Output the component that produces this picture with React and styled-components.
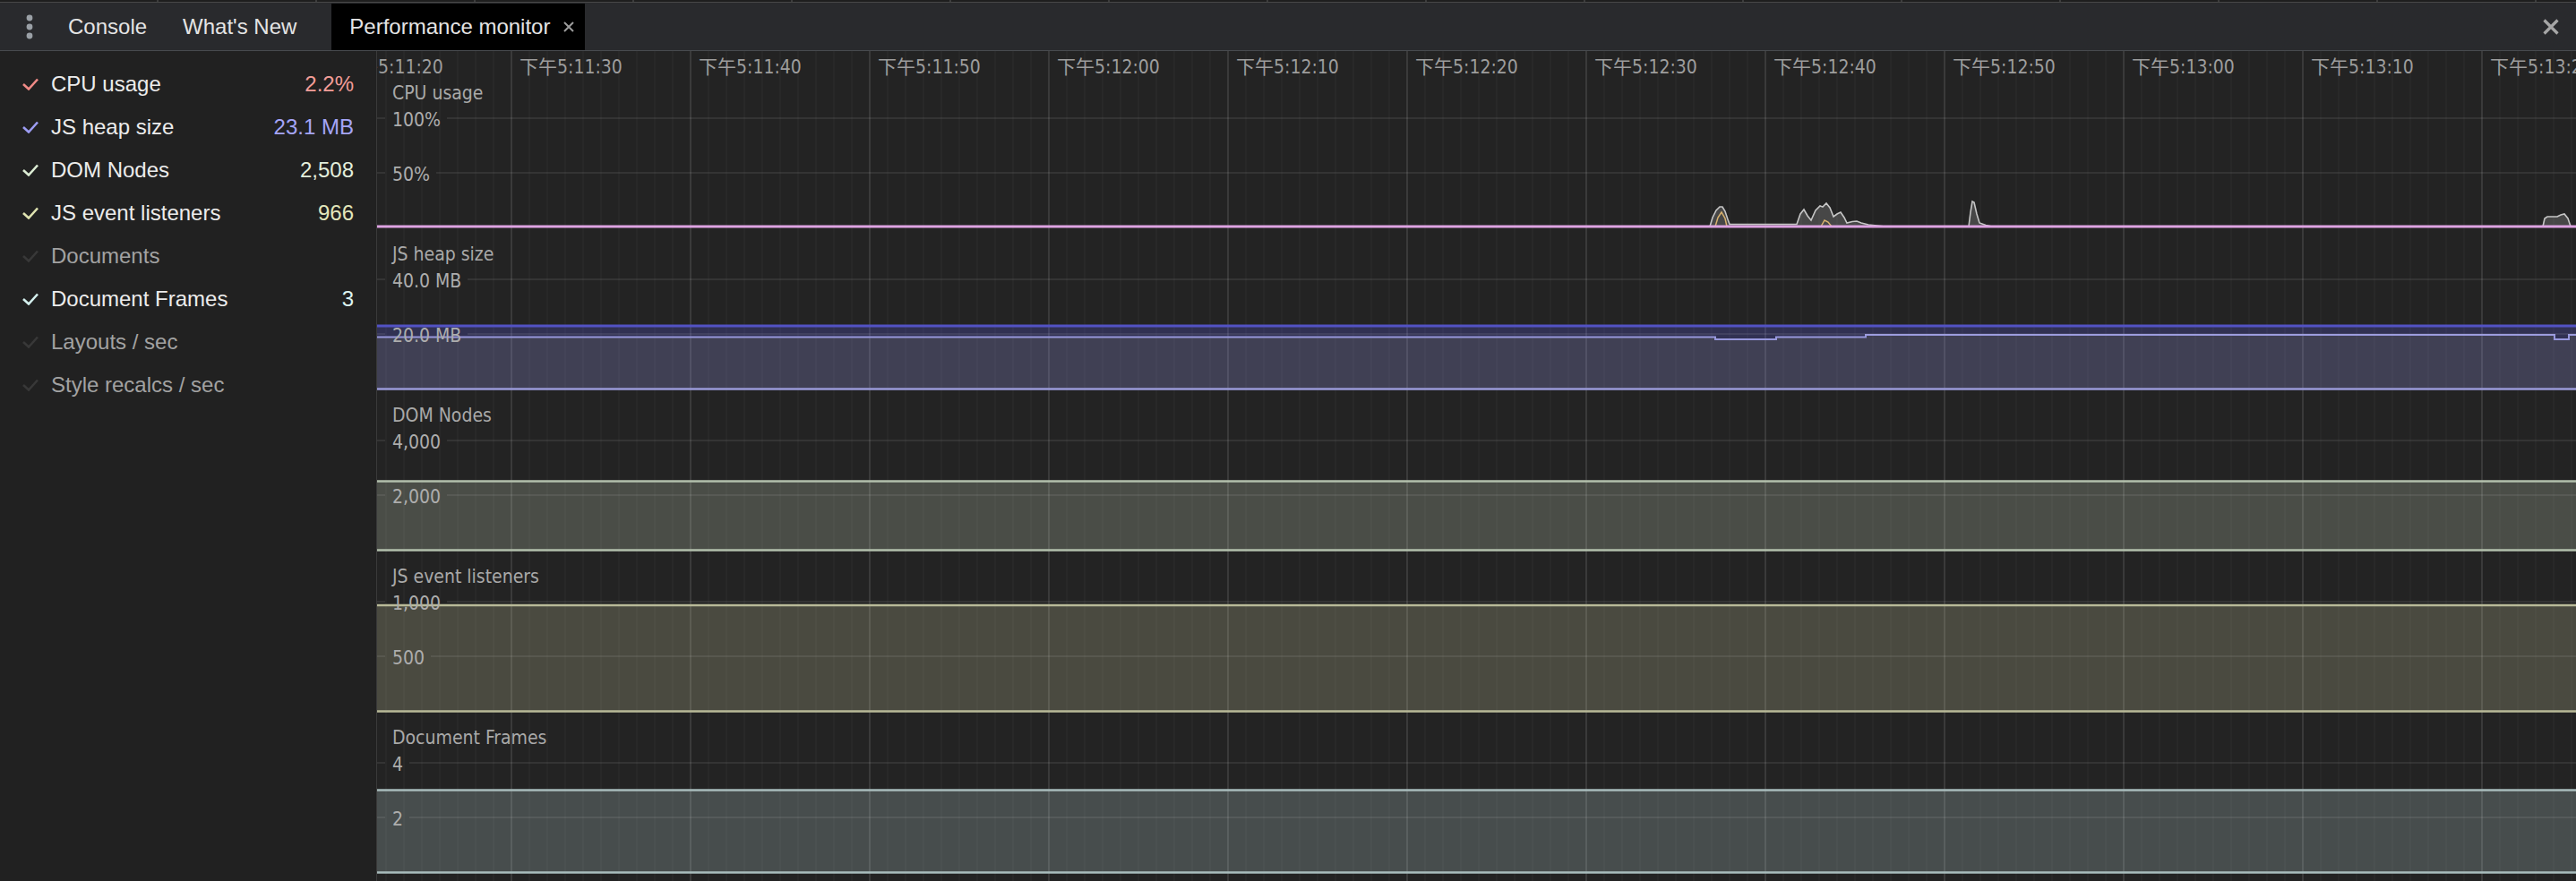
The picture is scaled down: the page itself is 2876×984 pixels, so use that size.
import React from "react";
import styled, { createGlobalStyle } from "styled-components";

const CHART_FONT = `"DejaVu Sans Condensed", "DejaVu Sans", "Noto Sans CJK SC", sans-serif`;
const PLOT_WIDTH = 2455;

const GlobalStyle = createGlobalStyle`
  html, body {
    margin: 0;
    padding: 0;
    background: #232323;
    overflow: hidden;
  }
  body {
    font-family: "Liberation Sans", Arial, sans-serif;
  }
`;

const Page = styled.div`
  display: flex;
  flex-direction: column;
  width: 2876px;
  height: 984px;
`;

const TopStrip = styled.div`
  height: 2px;
  background-color: #1e1e1e;
  background-image: repeating-linear-gradient(
    90deg,
    transparent 0 175px,
    #3c3c3c 175px 177px
  );
  border-bottom: 1px solid #474747;
`;

const TabBar = styled.div`
  display: flex;
  align-items: stretch;
  height: 52px;
  padding-top: 1px;
  background: #292a2d;
  border-bottom: 1px solid #474a4e;
`;

const MenuButton = styled.div`
  width: 56px;
  display: flex;
  align-items: center;
  justify-content: center;
  padding-left: 10px;
  box-sizing: border-box;
`;

const Tab = styled.div`
  display: flex;
  align-items: center;
  padding: 0 ${(p) => (p.$active ? "11px" : "20px")} 0 20px;
  margin-left: ${(p) => (p.$active ? "19px" : "0")};
  background: ${(p) => (p.$active ? "#000" : "transparent")};
  color: #e4e4e4;
  font-size: 24px;
  white-space: nowrap;
`;

const TabClose = styled.svg`
  margin-left: 14px;
`;

const Spacer = styled.div`
  flex: 1;
`;

const CloseButton = styled.div`
  display: flex;
  align-items: center;
  padding: 0 18px 0 10px;
`;

const Main = styled.div`
  flex: 1;
  display: flex;
  min-height: 0;
`;

const Sidebar = styled.div`
  width: 420px;
  flex-shrink: 0;
  padding-top: 13px;
  background: #212121;
  border-right: 1px solid #3a3a3a;
`;

const MetricRow = styled.div`
  height: 48px;
  display: flex;
  align-items: center;
  padding: 0 25px;
  font-size: 24px;
`;

const Check = styled.svg`
  flex-shrink: 0;
  margin-right: 14px;
`;

const MetricLabel = styled.span`
  flex: 1;
  color: ${(p) => (p.$on ? "#ececec" : "#a2a2a2")};
`;

const MetricValue = styled.span`
  color: ${(p) => p.$color};
`;

const ChartPane = styled.div`
  flex: 1;
  display: flex;
  flex-direction: column;
  overflow: hidden;
  background-color: #232323;
  background-image: repeating-linear-gradient(
      90deg,
      transparent 0 149px,
      #3a3a3a 149px 151px,
      transparent 151px 200px
    ),
    repeating-linear-gradient(
      90deg,
      transparent 0 9px,
      #282828 9px 11px,
      transparent 11px 20px
    );
  font-family: ${CHART_FONT};
  font-stretch: condensed;
`;

const TimeAxis = styled.div`
  display: flex;
  height: 20px;
  margin-left: -41px;
`;

const TimeLabel = styled.div`
  width: 200px;
  flex-shrink: 0;
  padding-top: 7px;
  font-size: 21px;
  line-height: 22px;
  color: #9d9d9d;
  white-space: nowrap;
`;

const ChartBox = styled.div`
  position: relative;
  height: 180px;
  flex-shrink: 0;
`;

const Plot = styled.svg`
  position: absolute;
  left: 0;
  top: 0;
`;

const ChartTitle = styled.div`
  position: relative;
  padding: 16px 0 0 17px;
  font-size: 21px;
  line-height: 22px;
  color: #a9a9a9;
`;

const ScaleRow = styled.div`
  position: absolute;
  left: 0;
  right: 0;
  top: ${(p) => p.$y - 11}px;
  height: 22px;
  display: flex;
  align-items: center;
`;

const Tick = styled.span`
  width: 9px;
  height: 2px;
  flex-shrink: 0;
  background: rgba(255, 255, 255, 0.08);
`;

const ScaleLine = styled(Tick)`
  flex: 1;
`;

const ScaleLabel = styled.span`
  margin: 4px 7px 0 8px;
  font-size: 21px;
  line-height: 22px;
  color: #adadad;
`;

const metrics = [
  { label: "CPU usage", value: "2.2%", color: "#f29d98", check: "#f08a86", on: true },
  { label: "JS heap size", value: "23.1 MB", color: "#a5a5f8", check: "#9c9cf2", on: true },
  { label: "DOM Nodes", value: "2,508", color: "#e3eedc", check: "#dcecd4", on: true },
  { label: "JS event listeners", value: "966", color: "#e3e6bb", check: "#dfe3b0", on: true },
  { label: "Documents", on: false },
  { label: "Document Frames", value: "3", color: "#ddf3f0", check: "#d4f0ee", on: true },
  { label: "Layouts / sec", on: false },
  { label: "Style recalcs / sec", on: false },
];

const times = [
  "5:11:20", "5:11:30", "5:11:40", "5:11:50", "5:12:00", "5:12:10", "5:12:20",
  "5:12:30", "5:12:40", "5:12:50", "5:13:00", "5:13:10", "5:13:20",
];

// CPU activity bumps, in plot coordinates (zero line at y = 176)
const cpuBumps = [
  "M1488,176 L1491,166 L1495,158 L1499,154 L1502,154 L1505,159 L1508,168 L1510,173.5 L1585,173.5 L1589,162 L1593,157 L1597,164 L1601,169 L1606,158 L1611,153 L1614,154 L1618,150 L1622,155 L1626,165 L1630,162 L1634,160 L1638,166 L1641,172 L1647,170.5 L1652,170 L1657,172 L1665,174 L1684,176 Z",
  "M1777,176 L1779,160 L1781,148 L1783,149 L1786,162 L1789,172 L1796,174.5 L1803,176 Z",
  "M2418,176 L2420,167 L2423,165 L2434,165 L2438,163 L2442,162 L2446,167 L2449,176 Z",
];

const heapUsed = [
  [0, 119.5], [1494, 119.5], [1494, 122], [1562, 122], [1562, 119.5],
  [1662, 119.5], [1662, 117], [2431, 117], [2431, 122], [2447, 122],
  [2447, 117], [PLOT_WIDTH, 117],
];
const heapUsedLine = "M" + heapUsed.map((p) => p.join(",")).join(" L");
const heapBand =
  `M0,107 L${PLOT_WIDTH},107 L` +
  [...heapUsed].reverse().map((p) => p.join(",")).join(" L") +
  " Z";
const heapUsedArea = heapUsedLine + ` L${PLOT_WIDTH},177 L0,177 Z`;

const CheckMark = ({ color }) => (
  <Check width="18" height="14" viewBox="0 0 18 14">
    <path d="M1 7 L7 12.5 L17 1.5" fill="none" stroke={color} strokeWidth="2.6" />
  </Check>
);

const Level = ({ y, fill, line }) => (
  <>
    <rect x="0" y={y} width={PLOT_WIDTH} height={177.5 - y} fill={fill} />
    <line x1="0" x2={PLOT_WIDTH} y1={y} y2={y} stroke={line} strokeWidth="2.5" />
    <line x1="0" x2={PLOT_WIDTH} y1="177.5" y2="177.5" stroke={line} strokeWidth="2.5" />
  </>
);

const Chart = ({ title, top, mid, children }) => (
  <ChartBox>
    <Plot width={PLOT_WIDTH} height="180">
      {children}
    </Plot>
    <ChartTitle>{title}</ChartTitle>
    <ScaleRow $y={55}>
      <Tick />
      <ScaleLabel>{top}</ScaleLabel>
      <ScaleLine />
    </ScaleRow>
    <ScaleRow $y={116}>
      <Tick />
      <ScaleLabel>{mid}</ScaleLabel>
      <ScaleLine />
    </ScaleRow>
  </ChartBox>
);

const App = () => {
  return (
    <Page>
      <GlobalStyle />
      <TopStrip />
      <TabBar>
        <MenuButton>
          <svg width="8" height="28" viewBox="0 0 8 28">
            <circle cx="4" cy="4" r="3.4" fill="#9aa0a6" />
            <circle cx="4" cy="14" r="3.4" fill="#9aa0a6" />
            <circle cx="4" cy="24" r="3.4" fill="#9aa0a6" />
          </svg>
        </MenuButton>
        <Tab>Console</Tab>
        <Tab>What's New</Tab>
        <Tab $active>
          Performance monitor
          <TabClose width="14" height="14" viewBox="0 0 14 14">
            <path d="M2 2 L12 12 M12 2 L2 12" stroke="#9c9c9c" strokeWidth="2" />
          </TabClose>
        </Tab>
        <Spacer />
        <CloseButton>
          <svg width="20" height="20" viewBox="0 0 20 20">
            <path d="M2.5 2.5 L17.5 17.5 M17.5 2.5 L2.5 17.5" stroke="#a6a6a6" strokeWidth="3.2" />
          </svg>
        </CloseButton>
      </TabBar>
      <Main>
        <Sidebar>
          {metrics.map((m) => (
            <MetricRow key={m.label}>
              <CheckMark color={m.on ? m.check : "#383838"} />
              <MetricLabel $on={m.on}>{m.label}</MetricLabel>
              {m.value && <MetricValue $color={m.color}>{m.value}</MetricValue>}
            </MetricRow>
          ))}
        </Sidebar>
        <ChartPane>
          <TimeAxis>
            {times.map((t) => (
              <TimeLabel key={t}>下午{t}</TimeLabel>
            ))}
          </TimeAxis>
          <Chart title="CPU usage" top="100%" mid="50%">
            {cpuBumps.map((d, i) => (
              <path key={i} d={d} fill="rgba(190,190,190,0.24)" stroke="#c6c6c6" strokeWidth="1.6" />
            ))}
            <path d="M1494,176 L1497,166 L1501,160 L1505,167 L1507,176" fill="none" stroke="#d9b26e" strokeWidth="1.5" />
            <path d="M1612,176 L1616,169 L1620,171 L1624,176" fill="none" stroke="#d9b26e" strokeWidth="1.5" />
            <line x1="0" x2={PLOT_WIDTH} y1="176" y2="176" stroke="#dea3e2" strokeWidth="3" />
          </Chart>
          <Chart title="JS heap size" top="40.0 MB" mid="20.0 MB">
            <path d={heapBand} fill="rgba(100,100,255,0.22)" />
            <path d={heapUsedArea} fill="rgba(150,150,230,0.25)" />
            <line x1="0" x2={PLOT_WIDTH} y1="107" y2="107" stroke="#5252c4" strokeWidth="3" />
            <path d={heapUsedLine} fill="none" stroke="#9797dc" strokeWidth="2" />
            <line x1="0" x2={PLOT_WIDTH} y1="177.5" y2="177.5" stroke="#9a9ad8" strokeWidth="2.5" />
          </Chart>
          <Chart title="DOM Nodes" top="4,000" mid="2,000">
            <Level y={100.5} fill="rgba(200,215,190,0.24)" line="#b3c0ad" />
          </Chart>
          <Chart title="JS event listeners" top="1,000" mid="500">
            <Level y={59} fill="rgba(200,200,160,0.24)" line="#b9ba98" />
          </Chart>
          <Chart title="Document Frames" top="4" mid="2">
            <Level y={85.5} fill="rgba(190,215,215,0.24)" line="#a9bdbd" />
          </Chart>
        </ChartPane>
      </Main>
    </Page>
  );
};

export default App;
